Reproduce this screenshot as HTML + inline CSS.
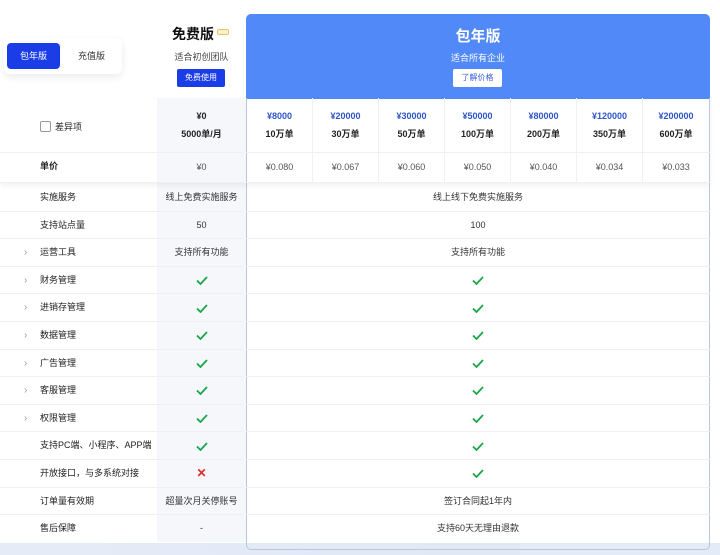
<!DOCTYPE html>
<html><head><meta charset="utf-8"><style>
*{margin:0;padding:0;box-sizing:border-box}
body{width:720px;height:555px;overflow:hidden;background:#fff;font-family:"Liberation Sans","Noto Sans CJK SC",sans-serif;color:#222;position:relative}
.abs{position:absolute}
.c{text-align:center}
.row{position:absolute;left:0;width:710px;height:27.6px;border-bottom:1px solid #eef0f4;font-size:9px}
.row .l{position:absolute;left:40px;top:0;line-height:27px;color:#222}
.row .ar{position:absolute;left:24px;top:0;line-height:27px;color:#999;font-size:10px}
.row .f{position:absolute;left:157px;width:89px;top:0;line-height:27px;text-align:center;color:#333}
.row .p{position:absolute;left:247px;width:462px;top:0;line-height:27px;text-align:center;color:#333}
.row .x{color:#e02828;font-size:12px;font-weight:bold}
svg.ck{vertical-align:middle}
.pc{position:absolute;width:66px;text-align:center;border-right:1px solid #f0f1f4}
.pc .u{margin-top:19px;color:#555}
</style></head><body>
<!-- bottom light band -->
<div class="abs" style="left:0;top:543px;width:720px;height:12px;background:linear-gradient(90deg,#e6ecf7,#dde6f6)"></div>
<div class="abs" style="left:520px;top:543px;width:200px;height:12px;background:#e3eaf8"></div>
<!-- free column bg -->
<div class="abs" style="left:157px;top:98px;width:89px;height:444px;background:#f5f7fb"></div>
<!-- toggle -->
<div class="abs" style="left:4px;top:38px;width:118px;height:36px;border-radius:6px;background:#fff;box-shadow:0 3px 8px rgba(0,0,0,.08)"></div>
<div class="abs c" style="left:7px;top:43px;width:53px;height:26px;border-radius:4px;background:#1a3de8;color:#fff;font-size:9px;line-height:26px">包年版</div>
<div class="abs c" style="left:64px;top:43px;width:55px;line-height:26px;font-size:9px;color:#333">充值版</div>
<!-- free header -->
<div class="abs" style="left:172px;top:24px;font-size:14px;font-weight:bold;color:#111">免费版</div>
<div class="abs" style="left:217px;top:29px;width:12px;height:6px;border:1px solid #e6c56a;border-radius:2px;background:#fbefc5"></div>
<div class="abs c" style="left:157px;top:50px;width:89px;font-size:9px;color:#444">适合初创团队</div>
<div class="abs c" style="left:177px;top:69px;width:48px;height:18px;background:#1a3de8;color:#fff;font-size:8px;line-height:18px;border-radius:2px">免费使用</div>
<!-- paid header -->
<div class="abs" style="left:246px;top:14px;width:464px;height:85px;background:#5189f8;border-radius:5px 5px 0 0"></div>
<div class="abs c" style="left:246px;top:25px;width:464px;color:#fff;font-size:15px;font-weight:bold">包年版</div>
<div class="abs c" style="left:246px;top:51px;width:464px;color:#fff;font-size:9px">适合所有企业</div>
<div class="abs c" style="left:453px;top:69px;width:49px;height:18px;background:#fff;color:#3a5fd6;font-size:8px;line-height:18px;border-radius:2px">了解价格</div>
<!-- paid column borders -->
<div class="abs" style="left:246px;top:98px;width:464px;height:452px;border:1px solid #b8c6df;border-top:none;border-radius:0 0 5px 5px"></div>
<!-- header rows -->
<div class="abs" style="left:0;top:98px;width:710px;height:85px;box-shadow:0 3px 5px rgba(0,0,0,.05);border-bottom:1px solid #eef0f4"></div>
<div class="abs" style="left:0;top:152px;width:710px;border-top:1px solid #eef0f4"></div>
<div class="abs" style="left:40px;top:121px;width:11px;height:11px;border:1px solid #999;border-radius:2px;background:#fff"></div>
<div class="abs" style="left:55px;top:120px;font-size:9px">差异项</div>
<div class="abs" style="left:40px;top:159px;font-size:9px;font-weight:bold">单价</div>
<div class="abs c" style="left:157px;top:107px;width:89px;font-size:9px;font-weight:bold;line-height:18px">¥0<br>5000单/月</div>
<div class="abs c" style="left:157px;top:162px;width:89px;font-size:9px;color:#555">¥0</div>
<div class="abs" style="left:247px;top:98px;width:462px;height:85px;font-size:9px">
<div class="pc" style="left:0;height:85px"><div style="margin-top:9px;line-height:18px;font-weight:bold"><span style="color:#2d54c8">¥8000</span><br>10万单</div><div class="u">¥0.080</div></div>
<div class="pc" style="left:66px;height:85px"><div style="margin-top:9px;line-height:18px;font-weight:bold"><span style="color:#2d54c8">¥20000</span><br>30万单</div><div class="u">¥0.067</div></div>
<div class="pc" style="left:132px;height:85px"><div style="margin-top:9px;line-height:18px;font-weight:bold"><span style="color:#2d54c8">¥30000</span><br>50万单</div><div class="u">¥0.060</div></div>
<div class="pc" style="left:198px;height:85px"><div style="margin-top:9px;line-height:18px;font-weight:bold"><span style="color:#2d54c8">¥50000</span><br>100万单</div><div class="u">¥0.050</div></div>
<div class="pc" style="left:264px;height:85px"><div style="margin-top:9px;line-height:18px;font-weight:bold"><span style="color:#2d54c8">¥80000</span><br>200万单</div><div class="u">¥0.040</div></div>
<div class="pc" style="left:330px;height:85px"><div style="margin-top:9px;line-height:18px;font-weight:bold"><span style="color:#2d54c8">¥120000</span><br>350万单</div><div class="u">¥0.034</div></div>
<div class="pc" style="left:396px;height:85px;border-right:none"><div style="margin-top:9px;line-height:18px;font-weight:bold"><span style="color:#2d54c8">¥200000</span><br>600万单</div><div class="u">¥0.033</div></div>
</div>
<!-- body rows -->
<div class="row" style="top:184px"><span class="l">实施服务</span><span class="f">线上免费实施服务</span><span class="p">线上线下免费实施服务</span></div>
<div class="row" style="top:211.6px"><span class="l">支持站点量</span><span class="f">50</span><span class="p">100</span></div>
<div class="row" style="top:239.2px"><span class="ar">›</span><span class="l">运营工具</span><span class="f">支持所有功能</span><span class="p">支持所有功能</span></div>
<div class="row" style="top:266.8px"><span class="ar">›</span><span class="l">财务管理</span><span class="f"><svg class="ck" width="12" height="9" viewBox="0 0 12 9"><path d="M1 4.5L4.5 8L11 1" fill="none" stroke="#1aa64a" stroke-width="1.8"/></svg></span><span class="p"><svg class="ck" width="12" height="9" viewBox="0 0 12 9"><path d="M1 4.5L4.5 8L11 1" fill="none" stroke="#1aa64a" stroke-width="1.8"/></svg></span></div>
<div class="row" style="top:294.4px"><span class="ar">›</span><span class="l">进销存管理</span><span class="f"><svg class="ck" width="12" height="9" viewBox="0 0 12 9"><path d="M1 4.5L4.5 8L11 1" fill="none" stroke="#1aa64a" stroke-width="1.8"/></svg></span><span class="p"><svg class="ck" width="12" height="9" viewBox="0 0 12 9"><path d="M1 4.5L4.5 8L11 1" fill="none" stroke="#1aa64a" stroke-width="1.8"/></svg></span></div>
<div class="row" style="top:322px"><span class="ar">›</span><span class="l">数据管理</span><span class="f"><svg class="ck" width="12" height="9" viewBox="0 0 12 9"><path d="M1 4.5L4.5 8L11 1" fill="none" stroke="#1aa64a" stroke-width="1.8"/></svg></span><span class="p"><svg class="ck" width="12" height="9" viewBox="0 0 12 9"><path d="M1 4.5L4.5 8L11 1" fill="none" stroke="#1aa64a" stroke-width="1.8"/></svg></span></div>
<div class="row" style="top:349.6px"><span class="ar">›</span><span class="l">广告管理</span><span class="f"><svg class="ck" width="12" height="9" viewBox="0 0 12 9"><path d="M1 4.5L4.5 8L11 1" fill="none" stroke="#1aa64a" stroke-width="1.8"/></svg></span><span class="p"><svg class="ck" width="12" height="9" viewBox="0 0 12 9"><path d="M1 4.5L4.5 8L11 1" fill="none" stroke="#1aa64a" stroke-width="1.8"/></svg></span></div>
<div class="row" style="top:377.2px"><span class="ar">›</span><span class="l">客服管理</span><span class="f"><svg class="ck" width="12" height="9" viewBox="0 0 12 9"><path d="M1 4.5L4.5 8L11 1" fill="none" stroke="#1aa64a" stroke-width="1.8"/></svg></span><span class="p"><svg class="ck" width="12" height="9" viewBox="0 0 12 9"><path d="M1 4.5L4.5 8L11 1" fill="none" stroke="#1aa64a" stroke-width="1.8"/></svg></span></div>
<div class="row" style="top:404.8px"><span class="ar">›</span><span class="l">权限管理</span><span class="f"><svg class="ck" width="12" height="9" viewBox="0 0 12 9"><path d="M1 4.5L4.5 8L11 1" fill="none" stroke="#1aa64a" stroke-width="1.8"/></svg></span><span class="p"><svg class="ck" width="12" height="9" viewBox="0 0 12 9"><path d="M1 4.5L4.5 8L11 1" fill="none" stroke="#1aa64a" stroke-width="1.8"/></svg></span></div>
<div class="row" style="top:432.4px"><span class="l">支持PC端、小程序、APP端</span><span class="f"><svg class="ck" width="12" height="9" viewBox="0 0 12 9"><path d="M1 4.5L4.5 8L11 1" fill="none" stroke="#1aa64a" stroke-width="1.8"/></svg></span><span class="p"><svg class="ck" width="12" height="9" viewBox="0 0 12 9"><path d="M1 4.5L4.5 8L11 1" fill="none" stroke="#1aa64a" stroke-width="1.8"/></svg></span></div>
<div class="row" style="top:460px"><span class="l">开放接口，与多系统对接</span><span class="f x">✕</span><span class="p"><svg class="ck" width="12" height="9" viewBox="0 0 12 9"><path d="M1 4.5L4.5 8L11 1" fill="none" stroke="#1aa64a" stroke-width="1.8"/></svg></span></div>
<div class="row" style="top:487.6px"><span class="l">订单量有效期</span><span class="f">超量次月关停账号</span><span class="p">签订合同起1年内</span></div>
<div class="row" style="top:515.2px;border-bottom:none"><span class="l">售后保障</span><span class="f">-</span><span class="p">支持60天无理由退款</span></div>
</body></html>
